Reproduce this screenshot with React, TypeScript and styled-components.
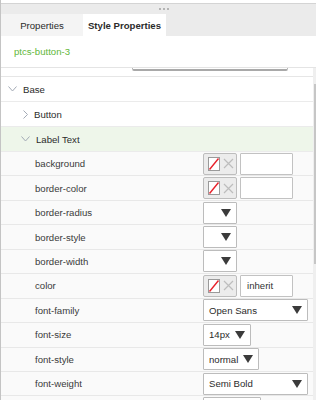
import styled, { createGlobalStyle } from "styled-components";

const GlobalStyle = createGlobalStyle`
  html, body {
    margin: 0;
    padding: 0;
    background: #ffffff;
  }
  body {
    font-family: "Liberation Sans", Arial, sans-serif;
    font-size: 9.6px;
    color: #333333;
  }
`;

const Panel = styled.div`
  width: 316px;
  height: 400px;
  box-sizing: border-box;
  border-left: 1px solid #c4c4c4;
  display: flex;
  flex-direction: column;
  overflow: hidden;
  background: #ffffff;
`;

const TopStrip = styled.div`
  height: 3px;
  flex-shrink: 0;
  border-bottom: 1px solid #d4d4d4;
  background: #ffffff;
`;

const Header = styled.div`
  background: #ebebeb;
  flex-shrink: 0;
  display: flex;
  flex-direction: column;
`;

const Grip = styled.div`
  height: 10px;
  display: flex;
  justify-content: center;
  align-items: center;
  gap: 2px;
  padding-left: 10px;
`;

const GripDot = styled.span`
  width: 2px;
  height: 2px;
  background: #b4b4b4;
`;

const TabRow = styled.div`
  display: flex;
  height: 22px;
`;

const Tab = styled.div<{ $active?: boolean }>`
  width: ${(p) => (p.$active ? "83px" : "82px")};
  display: flex;
  align-items: center;
  justify-content: center;
  font-size: 9.6px;
  font-weight: ${(p) => (p.$active ? 700 : 400)};
  color: #2b2b2b;
  background: ${(p) => (p.$active ? "#ffffff" : "#f4f4f4")};
`;

const Title = styled.div`
  height: 31px;
  flex-shrink: 0;
  display: flex;
  align-items: center;
  padding-left: 13px;
  color: #62b73a;
`;

const ScrollArea = styled.div`
  flex: 1;
  display: flex;
  border-top: 1px solid #e4e4e4;
  min-height: 0;
  overflow: hidden;
`;

const Content = styled.div`
  flex: 1;
  min-width: 0;
  display: flex;
  flex-direction: column;
`;

const Scrollbar = styled.div`
  width: 3px;
  flex-shrink: 0;
  background: #efefef;
  display: flex;
  flex-direction: column;
  align-items: flex-end;
`;

const Thumb = styled.div`
  width: 2px;
  height: 180px;
  margin-top: 16px;
  background: #c6c6c6;
`;

const ClippedRow = styled.div`
  height: 8px;
  flex-shrink: 0;
  overflow: hidden;
  display: flex;
  align-items: flex-end;
  padding-left: 131px;
  border-bottom: 1px solid #e6e6e6;
`;

const WideInput = styled.div`
  width: 156px;
  height: 22px;
  margin-bottom: 5px;
  flex-shrink: 0;
  box-sizing: border-box;
  border: 1px solid #b8b8b8;
  border-bottom: 2px solid #a9a9a9;
  border-radius: 2px;
`;

const GroupRow = styled.div<{ $indent: number; $selected?: boolean }>`
  height: 24px;
  flex-shrink: 0;
  display: flex;
  align-items: center;
  gap: 6px;
  padding-left: ${(p) => p.$indent}px;
  background: ${(p) => (p.$selected ? "#eef6ea" : "#ffffff")};
  border-bottom: 1px solid #ebebeb;
  font-size: 9.6px;
  color: #2b2b2b;
`;

const Chevron = styled.svg`
  flex-shrink: 0;
  stroke: #a3aab5;
  fill: none;
  stroke-width: 1;
`;

const PropRow = styled.div`
  height: 24.44px;
  flex-shrink: 0;
  box-sizing: border-box;
  display: grid;
  grid-template-columns: 168px 1fr;
  align-items: center;
  padding-left: 34px;
  border-bottom: 1px solid #e8e8e8;
  background: #fafafa;
`;

const PropLabel = styled.span`
  color: #3a3a3a;
`;

const Controls = styled.div`
  display: flex;
  align-items: center;
  gap: 3px;
`;

const Swatch = styled.div`
  width: 34px;
  height: 22px;
  box-sizing: border-box;
  border: 1px solid #bdbdbd;
  border-radius: 2px;
  background: #ececec;
  display: flex;
  align-items: center;
  padding-left: 4px;
  gap: 3px;
`;

const NoColor = styled.svg`
  display: block;
`;

const TextBox = styled.div`
  width: 53px;
  height: 22px;
  box-sizing: border-box;
  border: 1px solid #c2c2c2;
  border-radius: 1px;
  background: #ffffff;
  display: flex;
  align-items: center;
  padding-left: 6px;
  color: #333333;
`;

const Select = styled.div<{ $width: number }>`
  width: ${(p) => p.$width}px;
  height: 22px;
  box-sizing: border-box;
  border: 1px solid #bcbcbc;
  border-radius: 1px;
  background: #ffffff;
  display: flex;
  align-items: center;
  justify-content: space-between;
  padding: 0 5px 0 5px;
  color: #2b2b2b;
`;

const Arrow = styled.svg`
  display: block;
  flex-shrink: 0;
`;

const DownArrow = () => (
  <Arrow width="10" height="8" viewBox="0 0 10 8">
    <polygon points="0,0 10,0 5,8" fill="#3b3b3b" />
  </Arrow>
);

const ColorControl = ({ value }: { value?: string }) => (
  <Controls>
    <Swatch>
      <NoColor width="12" height="14" viewBox="0 0 12 14">
        <rect x="0.5" y="0.5" width="11" height="13" fill="#ffffff" stroke="#9a9a9a" />
        <line x1="1.5" y1="12.5" x2="10.5" y2="1.5" stroke="#e8202a" strokeWidth="1.4" />
      </NoColor>
      <NoColor width="11" height="11" viewBox="0 0 11 11">
        <path d="M1 1 L10 10 M10 1 L1 10" stroke="#bdbdbd" strokeWidth="1.2" />
      </NoColor>
    </Swatch>
    <TextBox>{value}</TextBox>
  </Controls>
);

const SelectControl = ({ width, value }: { width: number; value?: string }) => (
  <Select $width={width}>
    <span>{value}</span>
    <DownArrow />
  </Select>
);

type Prop = {
  name: string;
  kind: "color" | "select";
  value?: string;
  width?: number;
};

// last row is scrolled below the fold, only its control's top edge shows
const props: Prop[] = [
  { name: "background", kind: "color" },
  { name: "border-color", kind: "color" },
  { name: "border-radius", kind: "select", width: 34 },
  { name: "border-style", kind: "select", width: 34 },
  { name: "border-width", kind: "select", width: 34 },
  { name: "color", kind: "color", value: "inherit" },
  { name: "font-family", kind: "select", width: 105, value: "Open Sans" },
  { name: "font-size", kind: "select", width: 48, value: "14px" },
  { name: "font-style", kind: "select", width: 56, value: "normal" },
  { name: "font-weight", kind: "select", width: 105, value: "Semi Bold" },
  { name: "", kind: "select", width: 58 },
];

export default function App() {
  return (
    <>
      <GlobalStyle />
      <Panel>
        <TopStrip />
        <Header>
          <Grip>
            <GripDot />
            <GripDot />
            <GripDot />
          </Grip>
          <TabRow>
            <Tab>Properties</Tab>
            <Tab $active>Style Properties</Tab>
          </TabRow>
        </Header>
        <Title>ptcs-button-3</Title>
        <ScrollArea>
          <Content>
            <ClippedRow>
              <WideInput />
            </ClippedRow>
            <GroupRow $indent={7}>
              <Chevron width="9" height="6" viewBox="0 0 9 6">
                <path d="M0.5 0.5 L4.5 5 L8.5 0.5" />
              </Chevron>
              Base
            </GroupRow>
            <GroupRow $indent={22}>
              <Chevron width="5" height="9" viewBox="0 0 5 9">
                <path d="M0.5 0.5 L4.5 4.5 L0.5 8.5" />
              </Chevron>
              Button
            </GroupRow>
            <GroupRow $indent={20} $selected>
              <Chevron width="9" height="6" viewBox="0 0 9 6">
                <path d="M0.5 0.5 L4.5 5 L8.5 0.5" />
              </Chevron>
              Label Text
            </GroupRow>
            {props.map((p, i) => (
              <PropRow key={i}>
                <PropLabel>{p.name}</PropLabel>
                {p.kind === "color" ? (
                  <ColorControl value={p.value} />
                ) : (
                  <SelectControl width={p.width ?? 34} value={p.value} />
                )}
              </PropRow>
            ))}
          </Content>
          <Scrollbar>
            <Thumb />
          </Scrollbar>
        </ScrollArea>
      </Panel>
    </>
  );
}
